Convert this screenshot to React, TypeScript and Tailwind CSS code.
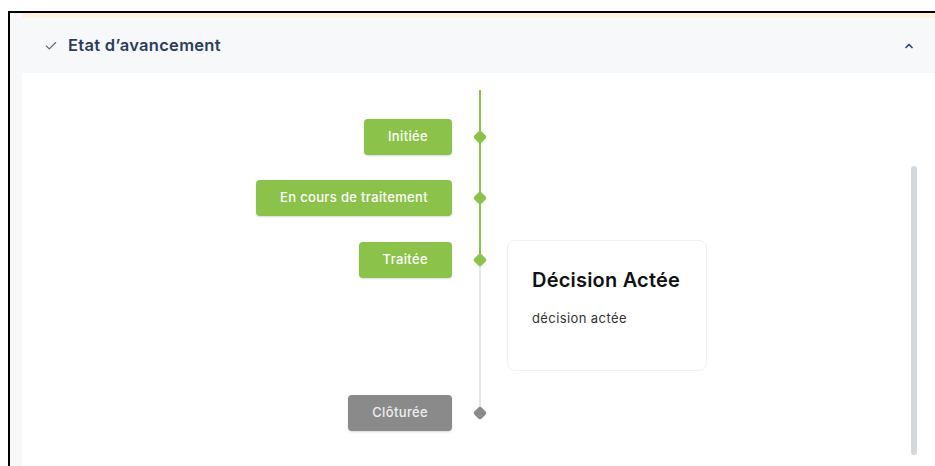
import { Check, ChevronUp } from 'lucide-react';

type Step = {
  label: string;
  done: boolean;
  lineTop: 'green' | 'gray' | 'none';
  lineBottom: 'green' | 'gray' | 'none';
  pt: string;
  pb: string;
  card?: { title: string; text: string };
};

const steps: Step[] = [
  { label: 'Initiée', done: true, lineTop: 'green', lineBottom: 'green', pt: 'pt-[29px]', pb: 'pb-[25px]' },
  { label: 'En cours de traitement', done: true, lineTop: 'green', lineBottom: 'green', pt: 'pt-0', pb: 'pb-[26px]' },
  {
    label: 'Traitée',
    done: true,
    lineTop: 'green',
    lineBottom: 'gray',
    pt: 'pt-0',
    pb: 'pb-[24px]',
    card: { title: 'Décision Actée', text: 'décision actée' },
  },
  { label: 'Clôturée', done: false, lineTop: 'gray', lineBottom: 'none', pt: 'pt-0', pb: 'pb-0' },
];

const segColor = (c: 'green' | 'gray' | 'none') =>
  c === 'green' ? 'bg-[#8bc34a]' : c === 'gray' ? 'bg-[#e3e6ea]' : 'bg-transparent';

const StepRow = ({ step }: { step: Step }) => {
  return (
    <div className="flex">
      {/* badge */}
      <div className={`w-[430px] flex justify-end ${step.pt} ${step.pb}`}>
        <div
          className={`h-[36px] px-6 flex items-center rounded-[4px] text-[13px] font-medium tracking-[0.35px] shadow-[0_1px_2px_rgba(0,0,0,0.15)] ${
            step.done ? 'bg-[#8bc34a] text-white' : 'bg-[#8a8a8a] text-[#eeeeee]'
          }`}
        >
          {step.label}
        </div>
      </div>

      {/* line + dot */}
      <div className="w-[55px] flex flex-col items-center">
        <div className={`w-[2px] ${step.pt === 'pt-0' ? 'h-[12px]' : 'h-[41px]'} ${segColor(step.lineTop)}`} />
        <div
          className={`w-[10px] h-[10px] rotate-45 rounded-[2px] my-[1px] ${
            step.done ? 'bg-[#8bc34a]' : 'bg-[#8a8a8a]'
          }`}
        />
        <div className={`w-[2px] flex-1 ${segColor(step.lineBottom)}`} />
      </div>

      {/* content */}
      <div className={`flex-1 ${step.pt} ${step.pb}`}>
        {step.card && (
          <div className="-mt-[2px] w-[200px] h-[131px] rounded-[8px] border border-[#f0f1f3] bg-white px-[24px] pt-[27px]">
            <div className="text-[20px] font-semibold text-[#111] leading-6 tracking-[0.2px]">{step.card.title}</div>
            <div className="mt-[17px] text-[13px] text-[#333] tracking-[0.4px]">{step.card.text}</div>
          </div>
        )}
      </div>
    </div>
  );
};

const App = () => {
  return (
    <div className="w-[935px] h-[466px] bg-white overflow-hidden" style={{ fontFamily: 'Inter, "Noto Sans", sans-serif' }}>
      <div className="ml-[8px] mt-[11px] h-[455px] border-l-2 border-t-2 border-black bg-[#f7f8fa] pl-[12px] flex flex-col">
        <div className="h-[5px] bg-[#fdf2df]" />
        <div className="h-[55px] bg-[#f7f8fa] flex items-center justify-between pl-[22px] pr-[20px]">
          <div className="flex items-center gap-[10px]">
            <Check className="w-[14px] h-[14px] text-[#5b6b82]" strokeWidth={2} />
            <span className="text-[16.5px] font-semibold text-[#2c3d5b] tracking-[0.3px]">Etat d’avancement</span>
          </div>
          <ChevronUp className="w-[12px] h-[12px] text-[#2c4a78]" strokeWidth={3.5} />
        </div>
        <div className="relative flex-1 bg-white pt-[17px]">
          {steps.map((s) => (
            <StepRow key={s.label} step={s} />
          ))}
          <div className="absolute left-[889px] top-[93px] w-[6px] h-[289px] rounded-full bg-[#d3d8dd]" />
        </div>
      </div>
    </div>
  );
};

export default App;
